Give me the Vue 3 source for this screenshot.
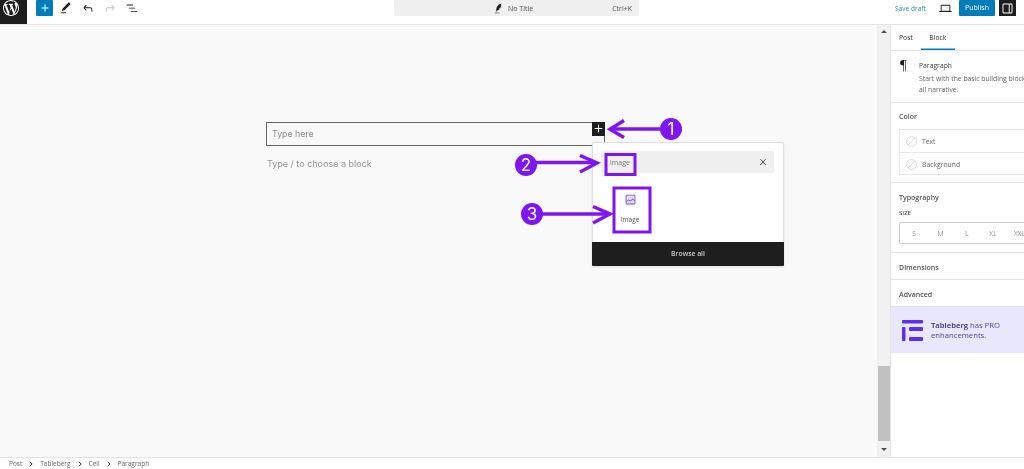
<script setup>
const crumbs = ['Post', 'Tableberg', 'Cell', 'Paragraph']
const sizes = ['S', 'M', 'L', 'XL', 'XXL']
const arrows = [
  { line: 'M660 129H612', head: 'M624 120.500L610 129.300L624 137.500', cx: 671, cy: 129, n: '1' },
  { line: 'M536 162.500H595', head: 'M580 155.500L597 163L580 172', cx: 526, cy: 165, n: '2' },
  { line: 'M542 214H608', head: 'M593 206.500L610 214L593 223', cx: 532, cy: 214, n: '3' },
]
</script>

<template>
  <div class="app">
    <header class="top">
      <div class="top-left">
        <div class="wp">
          <svg viewBox="0 0 20 20" width="16" height="16"><path fill="#fff" d="M20 10c0-5.510-4.490-10-10-10C4.480 0 0 4.490 0 10c0 5.520 4.480 10 10 10 5.510 0 10-4.480 10-10zM7.780 15.370L4.370 6.220c.550-.020 1.170-.080 1.170-.080.500-.060.440-1.130-.060-1.110 0 0-1.450.110-2.370.110-.180 0-.370 0-.580-.010C4.120 2.690 6.870 1.110 10 1.110c2.330 0 4.450.870 6.050 2.340-.680-.110-1.650.390-1.650 1.580 0 .740.450 1.360.900 2.100.350.610.550 1.360.550 2.460 0 1.490-1.400 5-1.400 5l-3.030-8.370c.540-.020.820-.170.820-.170.500-.050.440-1.250-.060-1.220 0 0-1.440.120-2.380.120-.870 0-2.330-.120-2.330-.120-.500-.030-.560 1.200-.060 1.220l.920.080 1.260 3.410zM17.410 10c.240-.640.740-1.870.430-4.250.700 1.290 1.050 2.710 1.050 4.250 0 3.290-1.730 6.240-4.480 7.820.970-2.600 1.940-5.240 3-7.820zM6.100 18.090C3.120 16.640 1.110 13.530 1.110 10c0-1.300.230-2.480.72-3.590C3.250 10.300 4.670 14.200 6.100 18.090zm4.460-7.020l2.570 6.980c-1 .320-1.930.550-3.130.550-1 0-1.930-.150-2.850-.430 1.160-3.370 2.280-6.710 3.410-7.100z"/></svg>
        </div>
        <div class="add">
          <svg viewBox="0 0 24 24" width="12" height="12"><path fill="#fff" d="M11 5h2v6h6v2h-6v6h-2v-6H5v-2h6z"/></svg>
        </div>
        <div class="tools">
          <svg viewBox="0 0 24 24" width="14" height="14"><path fill="#1e1e1e" d="M20.100 5.100L16.900 2 6.200 12.700l-1.300 4.400 4.500-1.300L20.100 5.100zM4 20.800h8v-1.500H4v1.500z"/></svg>
          <svg viewBox="0 0 24 24" width="14" height="14"><path fill="#1e1e1e" d="M18.300 11.700c-.6-.6-1.400-.9-2.300-.9H6.700l2.900-3.300-1.100-1-4.500 5L8.500 16.500l1.100-1-2.900-3.200H16c.5 0 .9.200 1.300.5.400.4.500.8.500 1.300v4.200h1.500v-4.200c0-.9-.3-1.700-1-2.400z"/></svg>
          <svg viewBox="0 0 24 24" width="14" height="14"><path fill="#c4c4c4" transform="matrix(-1 0 0 1 24 0)" d="M18.300 11.700c-.6-.6-1.400-.9-2.300-.9H6.700l2.900-3.300-1.100-1-4.500 5L8.500 16.500l1.100-1-2.900-3.200H16c.5 0 .9.200 1.300.5.400.4.500.8.500 1.300v4.200h1.500v-4.200c0-.9-.3-1.700-1-2.400z"/></svg>
          <svg viewBox="0 0 24 24" width="14" height="14"><path fill="#1e1e1e" d="M3 6h11v1.500H3V6zm3.500 5.500h11V13h-11v-1.500zM21 17H10v1.500h11V17z"/></svg>
        </div>
      </div>
      <div class="command">
        <div class="cmd-title">
          <svg viewBox="0 0 24 24" width="11" height="13"><path fill="#1e1e1e" d="M18 1c-4 1-8 4-10 9-.7 2-1 4-1 6l-1 3h1.500l.8-2.500c2.500-.2 4.700-1.500 6.200-3.500l-2.500-.5 3.500-1.200c1-1.500 1.700-3.300 2-5.300.2-1.600.5-3.300.5-5zM4 21h10v1.500H4z"/></svg>
          <span>No Title</span>
        </div>
        <span class="kbd">Ctrl+K</span>
      </div>
      <div class="top-right">
        <span class="save">Save draft</span>
        <svg class="laptop" viewBox="0 0 24 24" width="15" height="15"><path fill="#1e1e1e" d="M20.500 16h-.7V8c0-1.100-.9-2-2-2H6.200c-1.100 0-2 .9-2 2v8h-.7c-.8 0-1.500.7-1.500 1.500h20c0-.8-.7-1.500-1.500-1.500zM5.700 8c0-.3.200-.5.500-.5h11.600c.3 0 .5.200.5.500v7.600H5.700V8z"/></svg>
        <div class="publish">Publish</div>
        <div class="panel-btn">
          <svg viewBox="0 0 24 24" width="15" height="15"><path fill="#fff" d="M18 4H6c-1.100 0-2 .9-2 2v12c0 1.100.9 2 2 2h12c1.100 0 2-.9 2-2V6c0-1.100-.9-2-2-2zM5.500 18V6c0-.3.200-.5.500-.5h8v13H6c-.3 0-.5-.2-.5-.5zm13 0c0 .3-.2.500-.5.500h-2.500v-13H18c.3 0 .5.200.5.500v12z"/></svg>
        </div>
      </div>
    </header>

    <main class="main">
      <section class="canvas">
        <div class="field">
          <span>Type here</span>
          <div class="plus">
            <svg viewBox="0 0 24 24" width="13" height="13"><path fill="#fff" d="M11 5h2v6h6v2h-6v6h-2v-6H5v-2h6z"/></svg>
          </div>
        </div>
        <p class="hint">Type / to choose a block</p>

        <div class="popover">
          <div class="search">
            <span>image</span>
            <svg viewBox="0 0 24 24" width="10" height="10"><path fill="#1e1e1e" d="M13 11.800l6.100-6.300-1-1-6.100 6.200-6.100-6.200-1 1 6.100 6.300-6.500 6.700 1 1 6.500-6.600 6.500 6.600 1-1z"/></svg>
          </div>
          <div class="results">
            <div class="result">
              <svg viewBox="0 0 24 24" width="13" height="13"><path fill="#e6dcf8" d="M5 4h14l1 1v14l-1 1H5l-1-1V5z"/><path fill="#7b3fd0" d="M19 3H5c-1.100 0-2 .9-2 2v14c0 1.100.9 2 2 2h14c1.100 0 2-.9 2-2V5c0-1.100-.9-2-2-2zM5 4.500h14c.3 0 .5.200.5.500v8.400l-3-2.900c-.3-.3-.8-.3-1 0L11.900 14 9 12c-.3-.2-.6-.2-.8 0l-3.600 2.600V5c-.1-.3.100-.5.400-.5zm14 15H5c-.3 0-.5-.2-.5-.5v-2.400l4.100-3 3 1.900c.3.200.7.200.9-.1L16 12l3.500 3.400V19c0 .3-.2.500-.5.500z"/></svg>
              <span>Image</span>
            </div>
          </div>
          <div class="browse">Browse all</div>
        </div>
      </section>

      <div class="scrollbar">
        <i class="arrow up"></i>
        <div class="track"></div>
        <div class="thumb"></div>
        <div class="down-slot"><i class="arrow down"></i></div>
      </div>

      <aside class="side">
        <div class="tabs">
          <span class="tab">Post</span>
          <span class="tab active">Block</span>
        </div>
        <div class="card">
          <span class="pilcrow">¶</span>
          <div class="card-text">
            <strong>Paragraph</strong>
            <p>Start with the basic building block<br>all narrative.</p>
          </div>
        </div>
        <div class="sec sec-color">
          <h3>Color</h3>
          <div class="colors">
            <div class="color-row"><i class="swatch"></i>Text</div>
            <div class="color-row"><i class="swatch"></i>Background</div>
          </div>
        </div>
        <div class="sec sec-typo">
          <h3>Typography</h3>
          <div class="size-label">SIZE</div>
          <div class="sizes">
            <span v-for="s in sizes" :key="s">{{ s }}</span>
          </div>
        </div>
        <div class="sec sec-simple"><h3>Dimensions</h3></div>
        <div class="sec-simple adv"><h3>Advanced</h3></div>
        <div class="banner">
          <svg viewBox="0 0 21 21" width="21" height="21">
            <g fill="#5f2eea">
              <rect x="0" y="0" width="21" height="3.500" rx="1"/>
              <rect x="0" y="7" width="3.500" height="14" rx="1"/>
              <rect x="7" y="7" width="14" height="4" rx="1"/>
              <rect x="7" y="17" width="14" height="4" rx="1"/>
            </g>
          </svg>
          <p><b>Tableberg</b> has PRO<br>enhancements.</p>
        </div>
      </aside>
    </main>

    <footer class="crumbs">
      <template v-for="(c, i) in crumbs" :key="c">
        <span>{{ c }}</span>
        <svg v-if="i < crumbs.length - 1" viewBox="0 0 8 8" width="6" height="6"><path d="M2.500 1L5.500 4L2.500 7" fill="none" stroke="#333" stroke-width="1.300"/></svg>
      </template>
    </footer>

    <svg class="notes" viewBox="0 0 1024 469" width="1024" height="469">
      <g fill="none" stroke="#7f16f2" stroke-width="3">
        <rect x="606" y="154.500" width="29" height="20"/>
        <rect x="614" y="188" width="36" height="44"/>
      </g>
      <g v-for="a in arrows" :key="a.n">
        <path :d="a.line" stroke="#7f16f2" stroke-width="3.500" fill="none"/>
        <path :d="a.head" stroke="#7f16f2" stroke-width="3.500" fill="none"/>
        <circle :cx="a.cx" :cy="a.cy" r="11" fill="#7f16f2"/>
        <text :x="a.cx" :y="a.cy + 6" text-anchor="middle" class="num">{{ a.n }}</text>
      </g>
    </svg>
  </div>
</template>

<style>
html, body { margin: 0; padding: 0; background: #fff; }
</style>

<style scoped>
.app {
  position: relative;
  width: 1024px;
  height: 469px;
  overflow: hidden;
  display: flex;
  flex-direction: column;
  background: #fff;
  font-family: "Open Sans", "Noto Sans", sans-serif;
  color: #1e1e1e;
  filter: blur(0.3px);
}
.top {
  height: 24px;
  flex: none;
  display: grid;
  grid-template-columns: 394px 245px 1fr;
  align-items: start;
  border-bottom: 1px solid #e4e4e4;
  box-sizing: content-box;
}
.top-left { display: flex; align-items: flex-start; }
.wp {
  width: 27px;
  height: 24px;
  background: #1e1e1e;
  display: flex;
  padding-left: 3px;
  box-sizing: border-box;
}
.add {
  width: 17px;
  height: 16px;
  margin-left: 9px;
  background: #007cba;
  border-radius: 1px;
  display: flex;
  align-items: center;
  justify-content: center;
}
.tools {
  display: flex;
  gap: 8px;
  margin-left: 6px;
  height: 16px;
  align-items: center;
}
.command {
  height: 16px;
  background: #f0f0f0;
  border-radius: 0 0 2px 2px;
  display: grid;
  grid-template-columns: 1fr auto;
  align-items: center;
  font-size: 7px;
  color: #555;
  padding-right: 7px;
}
.cmd-title {
  display: flex;
  align-items: center;
  justify-content: center;
  gap: 4px;
  padding-left: 20px;
}
.top-right { display: flex; align-items: flex-start; height: 16px; }
.save {
  margin-left: 256px;
  font-size: 6.600px;
  line-height: 17px;
  color: #2f8fc4;
  white-space: nowrap;
}
.laptop { margin: 1px 6px 0 12px; }
.publish {
  width: 36px;
  height: 16px;
  background: #007cba;
  color: #fff;
  font-size: 7px;
  line-height: 16px;
  text-align: center;
  border-radius: 1px;
}
.panel-btn {
  margin-left: 4px;
  width: 17px;
  height: 16px;
  background: #1e1e1e;
  display: flex;
  align-items: center;
  justify-content: center;
}
.main { flex: 1; min-height: 0; display: flex; }
.canvas {
  position: relative;
  flex: 1;
  background: #f9f9f9;
  padding: 97px 0 0 266px;
  box-sizing: border-box;
  font-family: Inter, sans-serif;
}
.field {
  position: relative;
  width: 339px;
  height: 24px;
  border: 1.300px solid #666;
  box-sizing: border-box;
  font-size: 8.800px;
  line-height: 22.500px;
  padding-left: 5px;
  color: #8c8c8c;
}
.plus {
  position: absolute;
  right: -1.300px;
  top: -1.300px;
  width: 13px;
  height: 14px;
  background: #1e1e1e;
  display: flex;
  align-items: center;
  justify-content: center;
}
.hint {
  margin: 12px 0 0 1px;
  font-size: 9px;
  line-height: 12px;
  color: #949494;
}
.popover {
  position: absolute;
  left: 592px;
  top: 117px;
  width: 192px;
  height: 124px;
  box-sizing: border-box;
  background: #fff;
  border: 1px solid #e0e0e0;
  border-radius: 2px;
  box-shadow: 0 1px 3px rgba(0, 0, 0, .1);
  display: flex;
  flex-direction: column;
  font-family: "Open Sans", sans-serif;
}
.search {
  margin: 8px 9px 0 8px;
  height: 22px;
  background: #f0f0f0;
  display: flex;
  align-items: center;
  justify-content: space-between;
  padding: 0 6px 0 9px;
  font-size: 7px;
  color: #777;
}
.results { flex: 1; padding: 20px 0 0 19px; }
.result {
  width: 36px;
  display: flex;
  flex-direction: column;
  align-items: center;
  gap: 9px;
  font-size: 6.500px;
  color: #555;
}
.browse {
  height: 24px;
  margin: 0 -1px -1px;
  background: #1e1e1e;
  color: #ccc;
  font-size: 6.800px;
  font-weight: 600;
  line-height: 24px;
  text-align: center;
  border-radius: 0 0 1px 1px;
}
.scrollbar {
  width: 13px;
  flex: none;
  background: #f1f1f1;
  display: flex;
  flex-direction: column;
  align-items: center;
}
.track { flex: 1; }
.thumb { width: 12px; height: 75px; background: #c1c1c1; }
.down-slot { height: 16px; display: flex; align-items: center; }
.arrow { width: 0; height: 0; border-left: 3px solid transparent; border-right: 3px solid transparent; }
.arrow.up { border-bottom: 3px solid #505050; margin-top: 5px; }
.arrow.down { border-top: 3px solid #505050; }
.side {
  width: 134px;
  flex: none;
  box-sizing: border-box;
  border-left: 1px solid #e4e4e4;
  background: #fff;
  overflow: hidden;
  font-size: 6.800px;
}
.tabs {
  display: flex;
  height: 25px;
  border-bottom: 1px solid #e4e4e4;
  box-sizing: content-box;
}
.tab {
  line-height: 26px;
  padding: 0 8px;
  color: #333;
  font-weight: 500;
}
.tab.active {
  width: 34px;
  box-sizing: border-box;
  padding: 0;
  text-align: center;
  box-shadow: inset 0 -1.500px 0 #007cba;
}
.card {
  display: flex;
  height: 51px;
  box-sizing: content-box;
  border-bottom: 1px solid #e4e4e4;
  padding-left: 9px;
}
.pilcrow {
  width: 19px;
  flex: none;
  font-family: "Liberation Serif", serif;
  font-size: 15px;
  line-height: 26px;
  padding-top: 1px;
}
.card-text { padding-top: 9px; white-space: nowrap; color: #666; }
.card-text strong { display: block; font-weight: 400; color: #444; line-height: 11px; }
.card-text p { margin: 2px 0 0; line-height: 11px; }
h3 {
  margin: 0;
  font-size: 7px;
  font-weight: 600;
  line-height: 12px;
  color: #555;
}
.sec { border-bottom: 1px solid #e4e4e4; padding-left: 8px; }
.sec-color { height: 80px; padding-top: 8px; box-sizing: border-box; }
.colors {
  margin-top: 6px;
  width: 140px;
  border: 1px solid #e8e8e8;
  box-sizing: border-box;
  height: 46px;
}
.color-row {
  height: 22px;
  display: flex;
  align-items: center;
  color: #666;
  padding-left: 6px;
  gap: 5px;
}
.color-row + .color-row { border-top: 1px solid #e8e8e8; }
.swatch {
  width: 11px;
  height: 11px;
  border-radius: 50%;
  border: 1px solid #ddd;
  box-sizing: border-box;
  background: linear-gradient(-45deg, transparent 47%, #ddd 47%, #ddd 53%, transparent 53%);
}
.sec-typo { height: 70px; padding-top: 9px; box-sizing: border-box; }
.size-label { margin-top: 5px; font-size: 6px; font-weight: 600; line-height: 9px; color: #555; }
.sizes {
  margin-top: 4px;
  width: 140px;
  height: 22px;
  box-sizing: border-box;
  border: 1.300px solid #ccc;
  border-radius: 2px;
  display: grid;
  grid-template-columns: repeat(5, 26.300px);
  align-items: center;
  justify-items: center;
  color: #999;
  padding-left: 1px;
}
.sec-simple { height: 27px; padding-left: 8px; box-sizing: border-box; padding-top: 9px; }
.adv { padding-top: 9px; }
.banner {
  height: 46px;
  background: #e8e7fd;
  display: flex;
  align-items: center;
  padding-left: 11px;
  gap: 8px;
  box-shadow: 0 -1px 0 #e4e4e4;
}
.banner p { margin: 0; font-size: 7.700px; line-height: 10px; color: #4b3fa8; white-space: nowrap; }
.banner b { font-weight: 600; color: #3a2c8c; }
.crumbs {
  height: 11px;
  flex: none;
  border-top: 1px solid #e4e4e4;
  display: flex;
  align-items: center;
  padding-left: 9px;
  gap: 6px;
  font-size: 6.500px;
  color: #666;
}
.notes { position: absolute; left: 0; top: 0; pointer-events: none; }
.num { fill: #fff; font-size: 17px; font-family: Inter, sans-serif; font-weight: 400; }
</style>
